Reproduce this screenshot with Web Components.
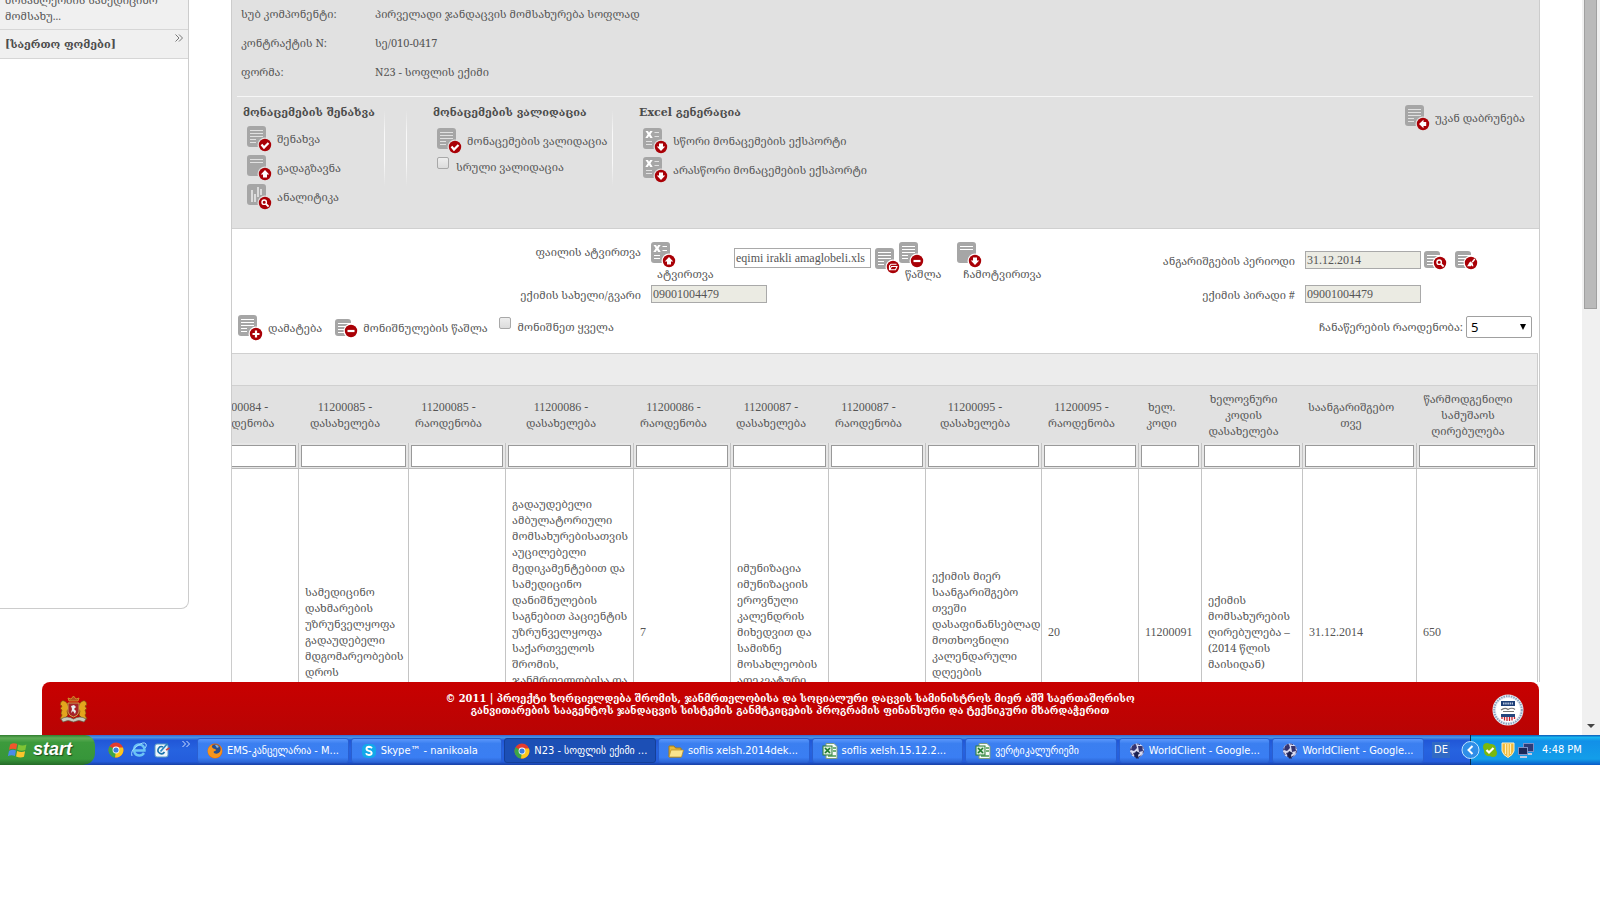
<!DOCTYPE html>
<html lang="ka">
<head>
<meta charset="utf-8">
<title>N23 - სოფლის ექიმი</title>
<style>
html, body { margin: 0; height: 100%; background: #fff; }
body { overflow: hidden; }
</style>
</head>
<body>
<desk-screen></desk-screen>
<script>
const FONT = '"Noto Serif Georgian", "DejaVu Serif", serif';
const LATIN = '"Liberation Serif", "Noto Serif Georgian", "DejaVu Serif", serif';
const UI = '"DejaVu Sans Condensed", "DejaVu Sans", sans-serif';

function define(name, css, html, setup) {
  customElements.define(name, class extends HTMLElement {
    constructor() {
      super();
      const root = this.attachShadow({ mode: 'open' });
      const tpl = document.createElement('template');
      tpl.innerHTML = `<style>:host,*{box-sizing:border-box}${css}</style>${html}`;
      root.append(tpl.content.cloneNode(true));
      if (setup) setup(this, root);
    }
  });
}

/* Document icons with a red badge */
const BADGES = {
  check: '<path d="M-3.5-.5L-1 2.5L3.5-2" fill="none" stroke="#fff" stroke-width="2.2"/>',
  up: '<path d="M0-4L4.200 .500H2V3.500H-2V.500H-4.200Z" fill="#fff"/>',
  down: '<path d="M0 4L4.200-.500H2V-3.500H-2V-.500H-4.200Z" fill="#fff"/>',
  left: '<path d="M-4 0L.500-4.200V-2H3.200V2H.500V4.200Z" fill="#fff"/>',
  plus: '<path d="M-3.5 0H3.5M0-3.5V3.5" stroke="#fff" stroke-width="2.2"/>',
  minus: '<path d="M-3.5 0H3.5" stroke="#fff" stroke-width="2.2"/>',
  find: '<circle cx="-.8" cy="-.8" r="2.2" fill="none" stroke="#fff" stroke-width="1.4"/><path d="M1 1L3.6 3.6" stroke="#fff" stroke-width="1.8"/>',
  open: '<path d="M-3.5 3V-1L-2-2.800H3.500M-3.300 2.800L-1.500-.5H4L2.500 2.800Z" fill="none" stroke="#fff" stroke-width="1.100"/>',
  brush: '<path d="M3.8-4L1.2-.8" stroke="#fff" stroke-width="1.4"/><path d="M-4 3.2C-2.8 2.6-2-1-.2-1.4L1.8.4L2.4 3.2H1L.6 2L0 3.2Z" fill="#fff"/>'
};
const SHEETS = {
  text: h => { let d = ''; for (let y = 4; y < h - 2; y += 3) d += `M3 ${y}.5H${y > 12 ? 9 : 16}`; return `<path d="${d}" stroke="var(--ring)" stroke-width="1.1"/>`; },
  short: () => '<path d="M3 4.5H16M3 7.5H16" stroke="var(--ring)" stroke-width="1.1"/>',
  chart: () => '<path d="M5 6V18M8 10V18M11 3V13M14 5V11" stroke="var(--ring)" stroke-width="1.8"/>',
  xls: () => '<path d="M2.500 3H5L6 4.800L7.200 3H9.700L7.500 6.300L9.700 10H7.200L6 8L4.800 10H2.300L4.700 6.300Z" fill="#fff"/><path d="M11.500 4.500H16M11.500 8.500H16M3 13.500H9M3 16.500H9" stroke="var(--ring)" stroke-width="1.200"/>'
};
define('doc-icon', ':host{display:block;flex:none;line-height:0}svg{display:block}', '', (el, root) => {
  const small = el.hasAttribute('small'), h = small ? 17 : 21;
  const w = small ? 16 : 19, cx = small ? 16 : 18, cy = small ? 12 : 19;
  root.innerHTML += `<svg width="${small ? 23 : 25}" height="${small ? 19 : 26}" aria-hidden="true">
  <rect width="${w}" height="${h}" rx="3" fill="#a6a6a6"/>${SHEETS[el.getAttribute('sheet') || 'text'](h)}
  <circle cx="${cx}" cy="${cy}" r="7.500" fill="var(--ring)"/><circle cx="${cx}" cy="${cy}" r="6.200" fill="#a90006"/>
  <g transform="translate(${cx} ${cy})">${BADGES[el.getAttribute('badge')]}</g></svg>`;
});

define('tool-button', `
:host{display:block}
button{display:flex;align-items:center;gap:5px;border:0;padding:0;background:none;color:inherit;font:inherit;line-height:16px;white-space:nowrap}
:host([stacked]) button{flex-direction:column;align-items:flex-start;gap:0}
:host([stacked]) span{padding-left:6px;margin-top:-2px}`,
'<button type="button"><slot name="icon"></slot><span><slot></slot></span></button>');

define('check-field', `
:host{display:block}
label{display:flex;gap:7px;line-height:16px;align-items:flex-start;white-space:nowrap}
input{appearance:none;width:12px;height:12px;margin:0;border:1px solid #a8a8a8;border-radius:2px;background:linear-gradient(#eee,#dcdcdc)}
span{padding-top:2px}`,
'<label><input type="checkbox"><span><slot></slot></span></label>');

define('tool-group', `
:host{display:block}
h2{margin:0 0 5px;font:bold 11px/16px "DejaVu Serif",serif;color:#4c4c4c;white-space:nowrap}
:host([loose]) h2{margin-bottom:7px}
div{display:flex;flex-direction:column;gap:3px;padding-left:4px}`,
'<h2></h2><div><slot></slot></div>', (el, root) => { root.querySelector('h2').textContent = el.getAttribute('heading'); });

define('side-menu', `
:host{display:block;width:189px;flex:none}
nav{height:617px;border:solid #ccc;border-width:0 1px 1px 0;border-radius:0 0 8px 0}
a{display:flex;justify-content:space-between;padding:0 5px;background:#f0f0f0;color:#555;text-decoration:none;line-height:16px;border-bottom:1px solid #d6d6d6}
a:first-child{padding-bottom:5px}
a.b{font:bold 11px/16px "DejaVu Serif",serif;color:#4c4c4c;padding-top:7px;padding-bottom:5px}
svg{flex:none}
a.b svg{margin-top:-3px}`,
`<nav><a href="#"><span>მოსახლეობის სამედიცინო<br>მომსახუ...</span><svg width="8" height="8"><path d="M.5.500L4 4L.5 7.500M4 .500L7.500 4L4 7.500" fill="none" stroke="#777"/></svg></a>
<a class="b" href="#"><span>[საერთო ფომები]</span><svg width="8" height="8"><path d="M.5.500L4 4L.5 7.500M4 .500L7.500 4L4 7.500" fill="none" stroke="#777"/></svg></a></nav>`);

define('contract-head', `
:host{display:block;background:#e1e1e1;border-bottom:1px solid #d0d0d0;padding:14px 6px 18px 5px;--ring:#e1e1e1}
dl{display:grid;grid-template-columns:134px 1fr;row-gap:13px;margin:0;padding:0 4px 16px;line-height:16px;border-bottom:1px solid #f6f6f6}
dd{margin:0}
.bar{display:flex;align-items:flex-start;padding:8px 8px 0 6px}
i{width:1px;height:76px;margin-top:5px;background:linear-gradient(#e1e1e1,#f8f8f8 30%,#f8f8f8 70%,#e1e1e1)}
.g1{width:141px}.gap{width:21px}
.g2{width:179px;margin-left:26px}.g3{margin-left:26px}
.back{margin-left:auto}`,
`<dl><dt>სუბ კომპონენტი:</dt><dd>პირველადი ჯანდაცვის მომსახურება სოფლად</dd>
<dt>კონტრაქტის N:</dt><dd>სე/010-0417</dd><dt>ფორმა:</dt><dd>N23 - სოფლის ექიმი</dd></dl>
<div class="bar">
<tool-group class="g1" heading="მონაცემების შენახვა">
<tool-button><doc-icon slot="icon" badge="check"></doc-icon>შენახვა</tool-button>
<tool-button><doc-icon slot="icon" sheet="short" badge="up"></doc-icon>გადაგზავნა</tool-button>
<tool-button><doc-icon slot="icon" sheet="chart" badge="find"></doc-icon>ანალიტიკა</tool-button></tool-group>
<i></i><span class="gap"></span><i></i>
<tool-group class="g2" loose heading="მონაცემების ვალიდაცია">
<tool-button><doc-icon slot="icon" badge="check"></doc-icon>მონაცემების ვალიდაცია</tool-button>
<check-field>სრული ვალიდაცია</check-field></tool-group>
<i></i>
<tool-group class="g3" loose heading="Excel გენერაცია">
<tool-button><doc-icon slot="icon" sheet="xls" badge="down"></doc-icon>სწორი მონაცემების ექსპორტი</tool-button>
<tool-button><doc-icon slot="icon" sheet="xls" badge="down"></doc-icon>არასწორი მონაცემების ექსპორტი</tool-button></tool-group>
<tool-button class="back"><doc-icon slot="icon" badge="left"></doc-icon>უკან დაბრუნება</tool-button>
</div>`);

define('report-form', `
:host{display:block;padding:13px 7px 12px 6px;--ring:#fff}
.cols{display:flex;justify-content:space-between}
.grid{display:grid;row-gap:3px;column-gap:10px}
.l{grid-template-columns:403px auto}
.r{grid-template-columns:auto auto;margin-right:54px}
label{line-height:16px;white-space:nowrap}
.grid>label{text-align:right;padding-top:2px}
.r>.low{padding-top:11px}
.file,.per{display:flex;align-items:flex-start;height:40px}
.per{padding-top:9px;gap:3px}
input{border:1px solid #a9a9a9;background:#ebebe3;color:#555;font:12px ${LATIN};padding:0 1px;width:116px;height:18px;display:block}
.file input{background:#fff;width:137px;height:20px;margin:6px 4px 0 20px}
.mid{margin-top:6px}
button{border:0;background:none;padding:0}
.brush{margin-left:5px}
.up{width:63px}.del{width:58px;margin-left:-1px}
.tools{display:flex;align-items:center;padding-top:12px}
.rm{margin-left:13px}.all{margin:-5px 0 0 11px}
.count{margin-left:auto;display:flex;align-items:center;gap:3px;margin-top:-2px}
.sel{position:relative}
.sel:after{content:"";position:absolute;right:6px;top:8px;border:3px solid transparent;border-top:6px solid #000;border-bottom:0}
select{appearance:none;width:66px;height:22px;border:1px solid #a0a0a0;border-radius:2px;background:#fff;color:#000;font:13px "Noto Sans",sans-serif;padding:0 4px;display:block}`,
`<div class="cols"><div class="grid l">
<label for="f">ფაილის ატვირთვა</label>
<div class="file"><tool-button class="up" stacked><doc-icon slot="icon" sheet="xls" badge="up"></doc-icon>ატვირთვა</tool-button>
<input id="f" value="eqimi irakli amaglobeli.xls"><button class="mid" aria-label="open"><doc-icon badge="open"></doc-icon></button>
<tool-button class="del" stacked><doc-icon slot="icon" badge="minus"></doc-icon>წაშლა</tool-button>
<tool-button stacked><doc-icon slot="icon" sheet="short" badge="down"></doc-icon>ჩამოტვირთვა</tool-button></div>
<label for="n">ექიმის სახელი/გვარი</label><input id="n" value="09001004479">
</div><div class="grid r">
<label class="low" for="p">ანგარიშგების პერიოდი</label>
<div class="per"><input id="p" value="31.12.2014"><button aria-label="find"><doc-icon small badge="find"></doc-icon></button><button class="brush" aria-label="clear"><doc-icon small badge="brush"></doc-icon></button></div>
<label for="q">ექიმის პირადი #</label><input id="q" value="09001004479">
</div></div>
<div class="tools">
<tool-button><doc-icon slot="icon" badge="plus"></doc-icon>დამატება</tool-button>
<tool-button class="rm"><doc-icon slot="icon" small badge="minus"></doc-icon>მონიშნულების წაშლა</tool-button>
<check-field class="all">მონიშნეთ ყველა</check-field>
<div class="count"><label for="c">ჩანაწერების რაოდენობა:</label><span class="sel"><select id="c"><option>5</option></select></span></div>
</div>`);

const COLS = [
  [98, '<b>11200084 -</b><br>რაოდენობა', ''],
  [110, '<b>11200085 -</b><br>დასახელება', 'სამედიცინო<br>დახმარების<br>უზრუნველყოფა<br>გადაუდებელი<br>მდგომარეობების<br>დროს'],
  [97, '<b>11200085 -</b><br>რაოდენობა', ''],
  [128, '<b>11200086 -</b><br>დასახელება', 'გადაუდებელი<br>ამბულატორიული<br>მომსახურებისათვის<br>აუცილებელი<br>მედიკამენტებით და<br>სამედიცინო<br>დანიშნულების<br>საგნებით პაციენტის<br>უზრუნველყოფა<br>საქართველოს<br>შრომის,<br>ჯანმრთელობისა და<br>სოციალური<br>დაცვის<br>მინისტრის<br>ბრძანების<br>მიხედვით'],
  [97, '<b>11200086 -</b><br>რაოდენობა', '<b>7</b>'],
  [98, '<b>11200087 -</b><br>დასახელება', 'იმუნიზაცია<br>იმუნიზაციის<br>ეროვნული<br>კალენდრის<br>მიხედვით და<br>სამიზნე<br>მოსახლეობის<br>ადეკვატური<br>მოცვა'],
  [97, '<b>11200087 -</b><br>რაოდენობა', ''],
  [116, '<b>11200095 -</b><br>დასახელება', 'ექიმის მიერ<br>საანგარიშგებო<br>თვეში<br>დასაფინანსებლად<br>მოთხოვნილი<br>კალენდარული<br>დღეების<br>რაოდენობა'],
  [97, '<b>11200095 -</b><br>რაოდენობა', '<b>20</b>'],
  [63, 'ხელ.<br>კოდი', '<b>11200091</b>'],
  [101, 'ხელოვნური<br>კოდის<br>დასახელება', 'ექიმის<br>მომსახურების<br>ღირებულება –<br>(2014 წლის<br>მაისიდან)'],
  [114, 'საანგარიშგებო<br>თვე', '<b>31.12.2014</b>'],
  [0, 'წარმოდგენილი<br>სამუშაოს<br>ღირებულება', '<b>650</b>']
];
define('record-grid', `
:host{display:block;border-top:1px solid #d0d0d0;overflow:hidden;margin-right:1px;border-right:1px solid #ccc}
.band{height:31px;background:#ececec}
table{table-layout:fixed;border-collapse:separate;border-spacing:0;width:calc(100% + 31px);margin-left:-31px;border-top:1px solid #d0d0d0}
th{background:#e1e1e1;height:57px;padding:0 18px 0 0;font-weight:normal;line-height:16px;text-align:center;white-space:nowrap}
b{font:12px/16px ${LATIN}}
td{border-right:1px solid #c4c4c4;height:326px;padding:0 6px;line-height:16px;vertical-align:middle;white-space:nowrap}
.f td{height:26px;padding:0 2px;background:#e6e6e6;border-bottom:1px solid #bbb}
td:last-child{border-right:0}
input{display:block;width:100%;height:22px;border:1px solid #999;background:#fff;padding:0 2px}`,
`<div class="band"></div><table><colgroup>${COLS.map(c => `<col${c[0] ? ` style="width:${c[0]}px"` : ''}>`).join('')}</colgroup>
<thead><tr>${COLS.map(c => `<th>${c[1]}</th>`).join('')}</tr></thead>
<tbody><tr class="f">${COLS.map(c => `<td><input aria-label="${c[1].replace(/<[^>]+>/g, ' ')}"></td>`).join('')}</tr>
<tr>${COLS.map(c => `<td>${c[2]}</td>`).join('')}</tr></tbody></table>`);

define('page-footer', `
:host{position:absolute;left:42px;right:61px;bottom:0;height:53px;display:flex;justify-content:space-between;align-items:flex-start;background:linear-gradient(#c80000,#b80404);border-radius:8px 8px 0 0;padding:11px 15px 0 17px;color:#fff}
p{margin:0;text-align:center;font:bold 11px/12px "DejaVu Serif Condensed","DejaVu Serif",serif}
svg{display:block}`,
`<svg width="29" height="28" viewBox="0 0 29 28" style="margin-top:3px" role="img" aria-label="საქართველოს გერბი">
<path d="M10 5L9 2L12 3L14.500 0L17 3L20 2L19 5Z" fill="#b4501e" stroke="#d8a030" stroke-width=".8"/>
<path d="M8 7Q4 3 2 6Q0 9 3 10Q0 13 3 14Q1 18 3 19L1 23L5 23L9 19L8 15L10 12Z" fill="#e3a51d" stroke="#7a4b10" stroke-width=".7"/>
<path d="M21 7Q25 3 27 6Q29 9 26 10Q29 13 26 14Q28 18 26 19L28 23L24 23L20 19L21 15L19 12Z" fill="#e3a51d" stroke="#7a4b10" stroke-width=".7"/>
<path d="M9 7H20V16Q19 20 14.500 21Q10 20 9 16Z" fill="#a6242a" stroke="#caa34a"/>
<path d="M12 10L15 9L17 11L15 13L17 15L16 18L14 15L12 17L13 13Z" fill="#e8f0f0"/>
<path d="M2 23Q8 19 14.500 23Q21 19 27 23L25 26Q20 23 14.500 26Q9 23 4 26Z" fill="#c9cabb" stroke="#68634d" stroke-width=".7"/></svg>
<p>© 2011 | პროექტი ხორციელდება შრომის, ჯანმრთელობისა და სოციალური დაცვის სამინისტროს მიერ აშშ საერთაშორისო<br>განვითარების სააგენტოს ჯანდაცვის სისტემის განმტკიცების პროგრამის ფინანსური და ტექნიკური მხარდაჭერით</p>
<svg width="32" height="34" viewBox="0 0 32 34" role="img" aria-label="USAID">
<circle cx="16" cy="17" r="15.500" fill="#e8eef4"/><circle cx="16" cy="17" r="13.800" fill="none" stroke="#8aa2be" stroke-width="2" stroke-dasharray="1.500 1"/><circle cx="16" cy="17" r="12" fill="#fff"/>
<rect x="9" y="8" width="14" height="5" fill="#1d3f78"/><path d="M11 10.500H21" stroke="#b8c6dc" stroke-width="2" stroke-dasharray="1.500 .7"/>
<path d="M9 17Q13 14 16 16.500Q20 14 23 16.500M11 18.500H22" fill="none" stroke="#777" stroke-width="1.200"/>
<path d="M9 21H23V24H9Z" fill="#24477e"/><path d="M10 24V26M12.500 24V27.500M15 24V28M17.500 24V28M20 24V27.500M22.500 24V26" stroke="#c8202c" stroke-width="1.300"/></svg>`);

define('scroll-rail', `
:host{display:block;width:18px;flex:none;background:#f0f0f0;position:relative}
div{height:309px;margin:0 3px 0 2px;background:#bababa;border:solid #a0a0a0;border-width:0 1px 1px}
svg{position:absolute;left:5px;bottom:7px}`,
'<div></div><svg width="8" height="4"><path d="M0 0H8L4 4Z" fill="#444"/></svg>');

define('web-page', `
:host{display:flex;flex:1;min-height:0;overflow:hidden;position:relative;font:11px/16px ${FONT};color:#555}
.doc{flex:1;min-width:0;display:flex;gap:42px;margin:-8px 0 53px;padding-right:42px;overflow:hidden}
main{flex:1;min-width:0;border:solid #ccc;border-width:0 1px}`,
`<div class="doc"><side-menu></side-menu><main><contract-head></contract-head><report-form></report-form><record-grid></record-grid></main></div><scroll-rail></scroll-rail><page-footer></page-footer>`);

/* Taskbar icons, drawn on a 16-unit square */
const APP = {
  chrome: '<circle cx="8" cy="8" r="7.500" fill="#e33b2e"/><path d="M8 8L1.500 4.200A7.500 7.500 0 0 0 7 15.500L10 10Z" fill="#3ba548"/><path d="M8 8L7 15.500A7.500 7.500 0 0 0 15 5.500H8Z" fill="#fbc81e"/><circle cx="8" cy="8" r="3.400" fill="#fff"/><circle cx="8" cy="8" r="2.600" fill="#3b7de0"/>',
  ie: '<path d="M13 5.500Q11.500 2.500 8 2.500A5.500 5.500 0 1 0 13 11M3.500 8.500H13.500Q13.500 7 13 5.500" fill="none" stroke="#6cc3f5" stroke-width="2.400"/><path d="M1 14Q-1 9 6 4T15 2Q16 4 14 6" fill="none" stroke="#9edcff"/>',
  mail: '<rect x="1" y="2" width="13" height="13" rx="2" fill="#eef6fb" stroke="#5a9bc4"/><path d="M10.500 10A3.500 3.500 0 1 1 9 5" fill="none" stroke="#1a73ad" stroke-width="1.600"/><path d="M6.500 9.500L13.500 1.500" stroke="#2e86c1" stroke-width="1.800"/><path d="M12 8L15.500 6" stroke="#c44" stroke-width="1.500"/>',
  firefox: '<circle cx="8" cy="8" r="7.500" fill="#e06a10"/><circle cx="8.500" cy="6.500" r="5" fill="#284f8e"/><path d="M1 6Q3 2 5 2Q4 5 8 6Q10 7 8 8Q6 8 7 10Q10 12 13 9Q15 6 13 2Q17 8 13 13Q8 17 3 13Q0 10 1 6Z" fill="#f7951d"/><path d="M8 2Q10 1 12 4L10 5Z" fill="#7db1e2"/>',
  skype: '<rect x="1" y="1" width="14" height="14" rx="5" fill="#12a9ea"/><path d="M11 5.200Q10 3.800 8 3.800Q5.500 3.900 5.500 5.800Q5.500 7.300 8 7.900Q10.800 8.500 10.700 10.200Q10.500 12 8 12Q5.500 12 5 10.300" fill="none" stroke="#fff" stroke-width="1.900"/>',
  folder: '<path d="M1 3H6L7.500 5H13V14H1Z" fill="#e7b93c" stroke="#a87c16"/><path d="M3 7H15.500L13.500 14H1Z" fill="#fbe48d" stroke="#b98c20" stroke-width=".7"/>',
  excel: '<path d="M4 .5H12L15 3.500V15.500H4Z" fill="#f7fbf7" stroke="#7d9c80"/><path d="M11 5H14M11 8H14M6 13H14" stroke="#4a9a52" stroke-width="1.500"/><rect x="1" y="3" width="9" height="9" fill="#d9ecd9" stroke="#2d7d38"/><path d="M3 5L8 10M8 5L3 10" stroke="#1f7a2c" stroke-width="1.700"/>',
  world: '<circle cx="8" cy="7.500" r="7" fill="#d9dcf2"/><path d="M3 3L7 1L8 5L5 8L2 7ZM9 3L13 3L14 8L10 9ZM4 10L8 9L9 13L6 14Z" fill="#34346f"/><circle cx="8" cy="7.500" r="6.500" fill="none" stroke="#43437f" stroke-dasharray="3 2"/><path d="M7 8L11 10L9 12L10 15.500H7L5.500 12Z" fill="#1c2250"/>',
  flag: '<path d="M1 3Q4 1 7.300 2.600L6.400 7.500Q3 6 0 7.800Z" fill="#f1562c"/><path d="M8.300 3Q12 5 15.500 3L14.500 8Q11 9.500 7.400 7.800Z" fill="#7fc435"/><path d="M0 8.800Q3 7 6.200 8.500L5.300 13.300Q2 12-1 13.500Z" fill="#4a8be8"/><path d="M7.200 8.800Q11 10.500 14.300 9L13.300 14Q10 15.500 6.300 13.700Z" fill="#fbc52c"/>',
  ok: '<path d="M2 2Q5 0 8 2Q14 1 14 8Q16 11 14 14Q11 16 8 14Q2 15 2 8Q0 5 2 2Z" fill="#7ab80e"/><path d="M4.500 8L7 10.500L11.500 6" fill="none" stroke="#fff" stroke-width="2.200"/>',
  shield: '<path d="M2 1H14V9Q13 13 8 15.500Q3 13 2 9Z" fill="#f0b93a" stroke="#fff0c0"/><path d="M5.500 2V12M8 2V14M10.500 2V12" stroke="#fff0b8" stroke-width="1.200"/>',
  net: '<rect x="5.500" y="1.500" width="10" height="8" fill="#2c3c78" stroke="#7e8fc4"/><path d="M9 12H14" stroke="#c0c8e0" stroke-width="2"/><rect x=".5" y="5.500" width="9" height="7" fill="#1c2858" stroke="#7e8fc4"/><path d="M2 15H9" stroke="#c0c8e0" stroke-width="2"/>'
};
define('app-icon', ':host{display:block;flex:none}svg{display:block;overflow:visible}', '', (el, root) => {
  const s = el.getAttribute('size') || 16;
  root.innerHTML += `<svg width="${s}" height="${s}" viewBox="0 0 16 16" aria-hidden="true">${APP[el.getAttribute('name')]}</svg>`;
});
define('task-button', `
:host{display:block;flex:1;min-width:0}
button{display:flex;align-items:center;gap:4px;width:100%;height:25px;border:1px solid #2a5fd0;border-radius:3px;padding:0 9px;background:linear-gradient(#5a97fb,#3b7ff0 20%,#3a7ef3 80%,#2c66d6);color:#fff;font:11px/16px ${UI};white-space:nowrap}
:host([active]) button{background:#1c4fb5;border-color:#153f99}`,
'<button type="button"><slot name="icon"></slot><span><slot></slot></span></button>');

define('task-bar', `
:host{display:flex;height:30px;flex:none;background:linear-gradient(#3168d5,#4993e6 8%,#2157d7 18%,#2663e0 50%,#245ddc 88%,#1941a5);color:#fff;font:11px/16px ${UI}}
.start{width:95px;border:0;border-radius:0 10px 12px 0;padding:0 0 1px 9px;display:flex;align-items:center;gap:6px;background:linear-gradient(#2f7d2f,#5eac56 10%,#3c9a3c 25%,#37963a 80%,#256b28);color:#fff;font:italic bold 18px "Liberation Sans",sans-serif;text-shadow:1px 1px 1px #1d4d1d}
.quick{display:flex;align-items:center;gap:7px;width:102px;padding-left:13px}
.quick svg{margin:-12px 0 0 5px}
.tasks{flex:1;display:flex;gap:2px;padding:3px 0 2px;min-width:0}
.lang{width:46px;display:flex;align-items:center;justify-content:center;padding-right:12px}
.lang span{background:#316ac5;padding:0 2px}
.tray{display:flex;align-items:center;gap:2px;width:130px;background:linear-gradient(#0c59b9,#18b6f0 8%,#1290e8 20%,#139ee9 80%,#095bc9);border-left:1px solid #092e51}
.tray svg{margin-left:-10px;flex:none}
time{margin-left:6px;white-space:nowrap}`,
`<button class="start" type="button"><app-icon name="flag" size="18"></app-icon>start</button>
<div class="quick"><app-icon name="chrome"></app-icon><app-icon name="ie"></app-icon><app-icon name="mail"></app-icon><svg width="8" height="6"><path d="M.5 0L3.500 3L.5 6M4.500 0L7.500 3L4.500 6" fill="none" stroke="#cfe0ff"/></svg></div>
<div class="tasks">
${[['firefox', 'EMS-კანცელარია - M...'], ['skype', 'Skype™ - nanikoala'], ['chrome', 'N23 - სოფლის ექიმი ...', 1], ['folder', 'soflis xelsh.2014dek...'], ['excel', 'soflis xelsh.15.12.2...'], ['excel', 'ვერტიკალურიემი'], ['world', 'WorldClient - Google...'], ['world', 'WorldClient - Google...']].map(t => `<task-button${t[2] ? ' active' : ''}><app-icon slot="icon" name="${t[0]}"></app-icon>${t[1]}</task-button>`).join('')}
</div>
<div class="lang"><span>DE</span></div>
<div class="tray"><svg width="19" height="20"><circle cx="9.500" cy="10" r="8.500" fill="#2f8ee8" stroke="#bfe3ff"/><path d="M11.500 6L7.500 10L11.500 14" fill="none" stroke="#fff" stroke-width="2"/></svg><app-icon name="ok"></app-icon><app-icon name="shield"></app-icon><app-icon name="net"></app-icon><time>4:48 PM</time></div>`);

define('desk-screen', ':host{display:flex;flex-direction:column;height:100vh;padding-bottom:135px}', '<web-page></web-page><task-bar></task-bar>');
</script>
</body>
</html>
